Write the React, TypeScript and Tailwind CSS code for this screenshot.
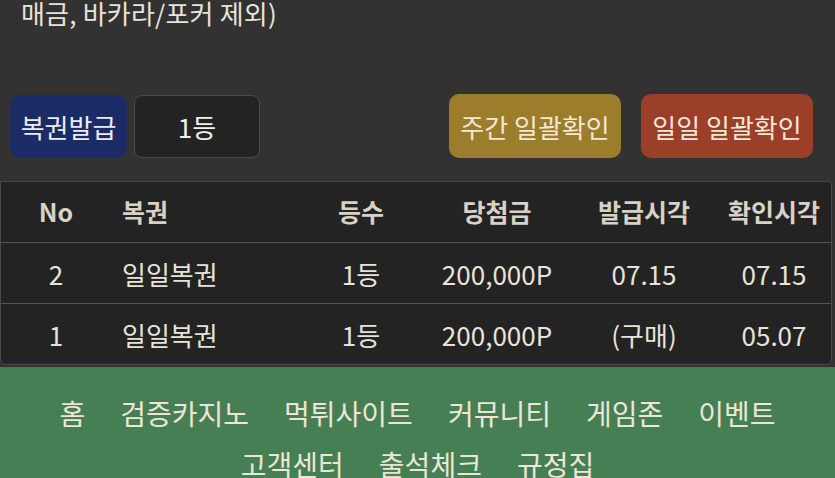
import React from 'react';

interface LotteryRow {
    no: number;
    name: string;
    rank: string;
    prize: string;
    issued: string;
    checked: string;
}

const rows: LotteryRow[] = [
    { no: 2, name: '일일복권', rank: '1등', prize: '200,000P', issued: '07.15', checked: '07.15' },
    { no: 1, name: '일일복권', rank: '1등', prize: '200,000P', issued: '(구매)', checked: '05.07' },
];

const navItems = ['홈', '검증카지노', '먹튀사이트', '커뮤니티', '게임존', '이벤트', '고객센터', '출석체크', '규정집'];

const gridCols = 'grid grid-cols-[110px_200px_100px_172px_122px_128px] items-center';

const App: React.FC = () => {
    return (
        <div
            className="w-[835px] h-[478px] overflow-hidden bg-[#323232] text-[#e8e3d8]"
            style={{ fontFamily: '"Noto Sans CJK KR", "Noto Sans", sans-serif' }}
        >
            {/* Notice text (cut off at top) */}
            <div className="-mt-[2px] pl-[21px] text-[26px] leading-[30px] tracking-[0.2px]">매금, 바카라/포커 제외)</div>

            {/* Action buttons */}
            <div className="flex items-center mt-[66px] h-[64px]">
                <button className="ml-[10px] w-[117px] h-[63px] rounded-[10px] bg-[#1b2b66] text-[26px] text-[#ecebf2]">
                    복권발급
                </button>
                <div className="ml-[7px] w-[126px] h-[63px] rounded-[8px] bg-[#232323] border border-[#4a4a4a] flex items-center justify-center text-[26px] text-[#f2f0ea]">
                    1등
                </div>
                <button className="ml-auto w-[172px] h-[64px] rounded-[10px] bg-[#9b7d2c] text-[26px] text-[#f1e9d2]">
                    주간 일괄확인
                </button>
                <button className="ml-[20px] mr-[22px] w-[172px] h-[64px] rounded-[10px] bg-[#9b3f29] text-[26px] text-[#f3e6dc]">
                    일일 일괄확인
                </button>
            </div>

            {/* Result table */}
            <div className="mt-[23px] w-[832px] h-[184px] bg-[#232323] border border-[#4a4a4a] rounded-b-[6px] rounded-tr-[4px] overflow-hidden">
                <div className={`${gridCols} h-[61px] border-b border-[#555555] text-[25px] font-bold text-[#d8d2c4]`}>
                    <div className="text-center">No</div>
                    <div className="pl-[11px]">복권</div>
                    <div className="text-center">등수</div>
                    <div className="text-center">당첨금</div>
                    <div className="text-center">발급시각</div>
                    <div className="text-center pl-[10px]">확인시각</div>
                </div>
                {rows.map((row, index) => (
                    <div
                        key={row.no}
                        className={`${gridCols} h-[61px] text-[26px] text-[#e8e3d8] ${index < rows.length - 1 ? 'border-b border-[#555555]' : ''}`}
                    >
                        <div className="text-center">{row.no}</div>
                        <div className="pl-[11px]">{row.name}</div>
                        <div className="text-center">{row.rank}</div>
                        <div className="text-center">{row.prize}</div>
                        <div className="text-center">{row.issued}</div>
                        <div className="text-center pl-[10px]">{row.checked}</div>
                    </div>
                ))}
            </div>

            {/* Footer navigation */}
            <div className="mt-[2px] h-[120px] bg-[#477f55] pt-[21px]">
                <div className="flex flex-wrap justify-center gap-x-[35px] px-[40px] text-[28px] leading-[51px] text-[#ece6d6]">
                    {navItems.map((item) => (
                        <span key={item}>{item}</span>
                    ))}
                </div>
            </div>
        </div>
    );
};

export default App;
